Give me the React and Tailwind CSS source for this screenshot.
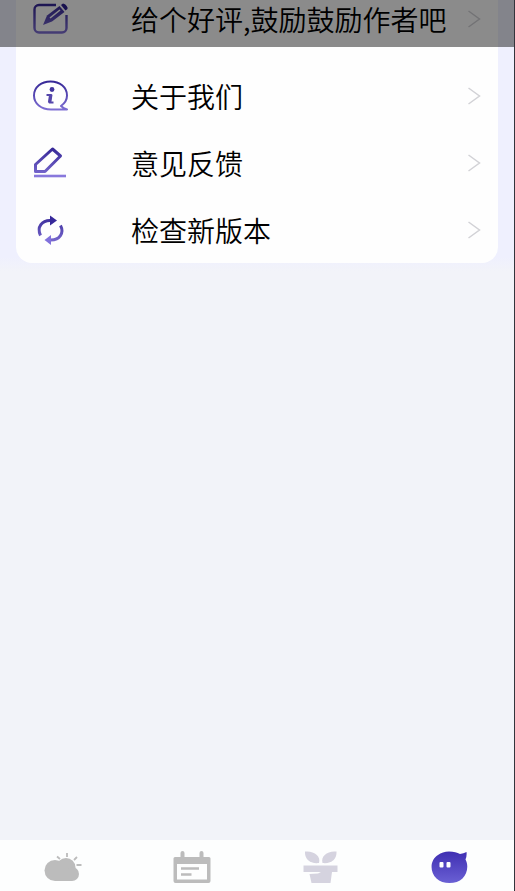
const Gradient = ({ id }) => (
  <defs>
    <linearGradient id={id} x1="0" y1="0" x2="0" y2="36" gradientUnits="userSpaceOnUse">
      <stop offset="0" stopColor="#2d1f8f" />
      <stop offset="1" stopColor="#8878dc" />
    </linearGradient>
  </defs>
)

const RateIcon = () => (
  <svg viewBox="0 0 36 36" className="size-9" fill="none" aria-hidden="true">
    <Gradient id="rate" />
    <path
      d="M24 4H7A4.500 4.500 0 0 0 2.500 8.500V27A4.500 4.500 0 0 0 7 31.500H30A4.500 4.500 0 0 0 34.500 27V14"
      stroke="url(#rate)"
      strokeWidth="2.400"
    />
    <path d="M11 24L15 14.500L27.500 5L32.500 11L20 20.500Z" fill="url(#rate)" />
    <path d="M18 17L28 9" stroke="#fff" strokeWidth="1.600" />
    <path d="M29 4L31 2.500Q34 3 35.500 6.500V8L33.500 9.500Z" fill="#2d1f8f" />
  </svg>
)

const AboutIcon = () => (
  <svg viewBox="0 0 36 36" className="size-9" fill="none" aria-hidden="true">
    <Gradient id="about" />
    <path
      d="M35 31.500H19C9 31.500 2 25.500 2 17.500C2 9 9.500 3.500 18.500 3.500S35 9 35 17.500C35 22 32.500 25.500 29 28Q31.500 30.500 35 31.500Z"
      stroke="url(#about)"
      strokeWidth="2"
      strokeLinejoin="round"
    />
    <circle cx="20" cy="11.500" r="2.400" fill="#43369f" />
    <path d="M14.500 17H19L17.500 24.500H21.500" stroke="#5546ab" strokeWidth="2.200" strokeLinejoin="round" />
    <path d="M18.800 16.500L17.600 24.500" stroke="#5546ab" strokeWidth="3.400" />
  </svg>
)

const FeedbackIcon = () => (
  <svg viewBox="0 0 36 36" className="size-9" fill="none" aria-hidden="true">
    <Gradient id="feedback" />
    <path d="M3.500 26.500V19.500L20.500 4L28.500 11L13 26.500Z" stroke="url(#feedback)" strokeWidth="3" strokeLinejoin="round" />
    <path d="M2 31H34" stroke="#8878dc" strokeWidth="2.600" />
  </svg>
)

const UpdateIcon = () => (
  <svg viewBox="0 0 36 36" className="size-9" fill="none" aria-hidden="true">
    <Gradient id="update" />
    <g stroke="url(#update)" strokeWidth="3">
      <path d="M8.500 23.500C4.500 15 10 8 19 8.500" />
      <path d="M28.500 13.500C32.500 21 27.500 28 19 28" />
    </g>
    <path d="M18 3.500L25 8.500L18 13.500Z" fill="#36289a" />
    <path d="M19 23V33L12.500 28Z" fill="#8171dc" />
  </svg>
)

const WeatherIcon = () => (
  <svg viewBox="0 0 40 36" className="h-9 w-10" fill="#bcbcbc" aria-hidden="true">
    <circle cx="11" cy="20.500" r="10.500" />
    <circle cx="22" cy="17.500" r="9.500" />
    <circle cx="28" cy="24" r="7" />
    <rect x="11" y="19" width="17" height="12" />
    <path d="M13 6.500L16 9M23 3V7M33 7L30 10M32.500 15H37.500" stroke="#bcbcbc" strokeWidth="1.800" />
  </svg>
)

const CalendarIcon = () => (
  <svg viewBox="0 0 40 36" className="h-9 w-10" aria-hidden="true">
    <path
      fillRule="evenodd"
      d="M2 7H36Q37.500 7 37.500 8.500V31Q37.500 33 35.500 33H2.500Q0.500 33 0.500 31V8.500Q0.500 7 2 7ZM4 14V29.500H34V14Z"
      fill="#bcbcbc"
    />
    <path d="M9.500 3V8M28.500 3V8" stroke="#bcbcbc" strokeWidth="4" strokeLinecap="round" />
    <path d="M8 18.500H26M8 24.500H18.500" stroke="#bcbcbc" strokeWidth="2.600" />
  </svg>
)

const PlantIcon = () => (
  <svg viewBox="0 0 40 36" className="h-9 w-10" fill="#d5d3df" aria-hidden="true">
    <path d="M4 1.500C13 0.500 20 6 18 13C9 14 3.500 9 4 1.500Z" />
    <path d="M35.500 1.500C26.500 0.500 19.500 6 21.500 13C30.500 14 36 9 35.500 1.500Z" />
    <path d="M2.500 15.500H36.500V22H31L29.500 33H10.500L8.500 24L17 23.500L20 22H2.500Z" />
  </svg>
)

const MineIcon = () => (
  <svg viewBox="0 0 40 36" className="h-9 w-10" aria-hidden="true">
    <defs>
      <linearGradient id="mine" x1="0" y1="0" x2="0" y2="1">
        <stop offset="0" stopColor="#3f2fb2" />
        <stop offset="1" stopColor="#6a60d4" />
      </linearGradient>
    </defs>
    <path
      d="M19 1.500C24 1.500 27 2.500 30 4Q33.500 3.500 36.500 2Q37 6 35.500 9.500C39 16 37 24 32.500 28.500C26.500 34.500 12.500 34.500 6.500 28.500C-1 21 0.500 9.500 8 5Q12.500 1.500 19 1.500Z"
      fill="url(#mine)"
    />
    <rect x="9.500" y="12" width="4" height="5.500" rx="1" fill="#fff" />
    <rect x="16.500" y="12" width="4" height="5.500" rx="1" fill="#fff" />
  </svg>
)

const Row = ({ icon: Icon, label }) => (
  <button type="button" className="flex h-[67px] w-full items-center pr-[17px] pl-4 text-left">
    <Icon />
    <span className="ml-[63px] flex-1 text-[28px] leading-10 font-[350] whitespace-nowrap text-black">{label}</span>
    <svg viewBox="0 0 14 20" className="h-5 w-3.5" fill="none" stroke="#d2d2d6" strokeWidth="1.500" aria-hidden="true">
      <path d="M1.500 2L12.500 10L1.500 18" />
    </svg>
  </button>
)

const tabs = [
  { name: '天气', icon: WeatherIcon },
  { name: '日历', icon: CalendarIcon },
  { name: '种植', icon: PlantIcon },
  { name: '我的', icon: MineIcon },
]

export default function App() {
  return (
    <div className="relative flex h-screen flex-col overflow-hidden border-r border-[#33343c] bg-[#f2f3f9] font-['Noto_Sans_CJK_SC','Noto_Sans',sans-serif]">
      <main className="flex-1">
        <div className="bg-linear-to-b from-[#eff0fe] from-95% to-[#f2f3f9] px-4 pb-2">
          <section className="-mt-[15px] rounded-b-2xl bg-[#fefefe]">
            <Row icon={RateIcon} label="给个好评,鼓励鼓励作者吧" />
            <div className="pt-2.5">
              <Row icon={AboutIcon} label="关于我们" />
              <Row icon={FeedbackIcon} label="意见反馈" />
              <Row icon={UpdateIcon} label="检查新版本" />
            </div>
          </section>
        </div>
      </main>
      <nav className="flex h-[51px] bg-[#fdfefe] pt-2.5">
        {tabs.map(({ name, icon: Icon }) => (
          <button key={name} type="button" aria-label={name} className="flex flex-1 justify-center">
            <Icon />
          </button>
        ))}
      </nav>
      <div className="pointer-events-none absolute inset-x-0 top-0 h-[47px] bg-black/45" />
    </div>
  )
}
